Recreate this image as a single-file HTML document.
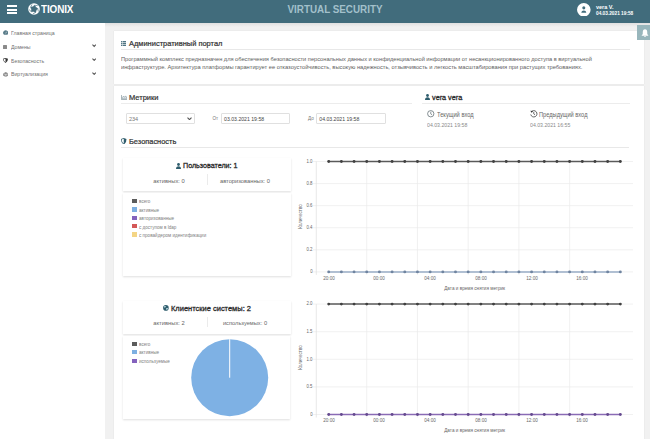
<!DOCTYPE html>
<html><head><meta charset="utf-8"><style>
html,body{margin:0;padding:0;width:650px;height:439px;overflow:hidden;background:#f1f1f1}
body{position:relative;font-family:"Liberation Sans", sans-serif}
body>div,body>svg{position:absolute;white-space:nowrap}
</style></head><body>
<div style="left:0px;top:0px;width:650px;height:23px;background:#416c7c"></div>
<div style="left:7px;top:5.1px;width:10px;height:1.9px;background:#fff"></div>
<div style="left:7px;top:8.8px;width:10px;height:1.9px;background:#fff"></div>
<div style="left:7px;top:12.4px;width:10px;height:1.9px;background:#fff"></div>
<svg style="left:27.7px;top:3.1px" width="12" height="12" viewBox="0 0 24 24">
<circle cx="12" cy="12" r="11.6" fill="#fff"/>
<path d="M13.32 4.52 L15.74 8.39 L19.53 10.94 L16.59 14.44 L15.33 18.83 L11.10 17.12 L6.53 17.28 L6.85 12.72 L5.29 8.43 L9.72 7.33 Z" fill="#416c7c" stroke="#416c7c" stroke-width="1" stroke-linejoin="round"/>
<path d="M13.32 4.52 L19.43 5.31 M19.53 10.94 L20.66 17.00 M15.33 18.83 L9.92 21.78 M6.53 17.28 L2.05 13.05 M5.29 8.43 L7.93 2.86" stroke="#416c7c" stroke-width="1.3"/>
</svg>
<div style="left:41.3px;top:5.19px;font-size:10.2px;line-height:10.2px;color:#fff;font-weight:bold;letter-spacing:-0.1px;transform:scaleX(0.97);transform-origin:left">TIONIX</div>
<div style="left:134.60000000000002px;width:400px;text-align:center;top:4.03px;font-size:11.2px;line-height:11.2px;color:#a3c0cb;font-weight:bold;transform:scaleX(0.88)">VIRTUAL SECURITY</div>
<svg style="left:577.2px;top:2.9px" width="13.6" height="13.6" viewBox="0 0 26 26">
<circle cx="13" cy="13" r="13" fill="#fff"/>
<circle cx="13" cy="9.3" r="2.9" fill="#416c7c"/>
<path d="M8.2 18.8 Q8.5 14.3 13 14.3 Q17.5 14.3 17.8 18.8 Z" fill="#416c7c"/>
</svg>
<div style="left:596px;top:5.22px;font-size:5.5px;line-height:5.5px;color:#fff;font-weight:bold;">vera V.</div>
<div style="left:596px;top:12.24px;font-size:4.75px;line-height:4.75px;color:#fff;font-weight:bold;">04.03.2021 19:58</div>
<div style="left:0px;top:23px;width:650px;height:416px;background:#f1f1f1"></div>
<div style="left:105px;top:23px;width:545px;height:4px;background:linear-gradient(#e0e0e0,#f1f1f1)"></div>
<div style="left:0px;top:23px;width:105px;height:416px;background:#fff"></div>
<div style="left:10.8px;top:29.54px;font-size:6.0px;line-height:6.0px;color:#6f6f6f;transform:scaleX(0.865);transform-origin:left">Главная страница</div>
<div style="left:10.8px;top:43.64px;font-size:6.0px;line-height:6.0px;color:#6f6f6f;transform:scaleX(0.865);transform-origin:left">Домены</div>
<div style="left:10.8px;top:57.54px;font-size:6.0px;line-height:6.0px;color:#6f6f6f;transform:scaleX(0.865);transform-origin:left">Безопасность</div>
<div style="left:10.8px;top:71.24px;font-size:6.0px;line-height:6.0px;color:#6f6f6f;transform:scaleX(0.865);transform-origin:left">Виртуализация</div>
<svg style="left:91.6px;top:44.0px" width="4.4" height="3.5" viewBox="0 0 10 8"><path d="M1 1.5 L5 5.5 L9 1.5" fill="none" stroke="#555" stroke-width="2.4"/></svg>
<svg style="left:91.6px;top:57.8px" width="4.4" height="3.5" viewBox="0 0 10 8"><path d="M1 1.5 L5 5.5 L9 1.5" fill="none" stroke="#555" stroke-width="2.4"/></svg>
<svg style="left:91.6px;top:71.6px" width="4.4" height="3.5" viewBox="0 0 10 8"><path d="M1 1.5 L5 5.5 L9 1.5" fill="none" stroke="#555" stroke-width="2.4"/></svg>
<svg style="left:2.6px;top:30.4px" width="5.4" height="4.8" viewBox="0 0 12 10.6"><path d="M2.2 10.4 A5.6 5.6 0 1 1 9.8 10.4 Z" fill="#5a7d8a"/><path d="M6 7.5 L8 3.8" stroke="#fff" stroke-width="1.2"/></svg>
<div style="left:3.1px;top:44.5px;width:3.5px;height:4.8px;background:#8a8a8a;border-radius:0.5px"></div>
<svg style="left:3px;top:58.2px" width="5" height="5" viewBox="0 0 10 10"><path d="M5 0 L10 1.5 Q10 7.5 5 10 Q0 7.5 0 1.5 Z" fill="#333"/><path d="M5 1.3 L5 8.6 Q1.3 6.8 1.3 2.4 Z" fill="#fff"/></svg>
<svg style="left:2.5px;top:72px" width="5.5" height="5" viewBox="0 0 11 10"><path d="M5.5 0 L11 3 L11 7 L5.5 10 L0 7 L0 3 Z" fill="#8f8f8f"/><path d="M5.5 4 L5.5 10 M0 3 L5.5 5.5 L11 3" stroke="#fff" stroke-width="0.8" fill="none"/></svg>
<div style="left:114px;top:31px;width:530px;height:53px;background:#fff;box-shadow:0 0 1px rgba(0,0,0,0.12)"></div>
<svg style="left:120.9px;top:40.9px" width="5.6" height="5" viewBox="0 0 11 10"><g fill="#4f7583"><rect x="0" y="0" width="2.6" height="2.6"/><rect x="3.4" y="0" width="7.6" height="2.6"/><rect x="0" y="3.7" width="2.6" height="2.6"/><rect x="3.4" y="3.7" width="7.6" height="2.6"/><rect x="0" y="7.4" width="2.6" height="2.6"/><rect x="3.4" y="7.4" width="7.6" height="2.6"/></g></svg>
<div style="left:128.8px;top:39.98px;font-size:7.9px;line-height:7.9px;color:#333;transform:scaleX(0.945);transform-origin:left;-webkit-text-stroke:0.22px #333">Административный портал</div>
<div style="left:120.5px;top:49px;width:509px;height:0.6px;background:#e8e8e8"></div>
<div style="left:121px;top:56.44px;font-size:6.0px;line-height:6.0px;color:#606060;transform:scaleX(0.944);transform-origin:left">Программный комплекс предназначен для обеспечения безопасности персональных данных и конфиденциальной информации от несанкционированного доступа в виртуальной</div>
<div style="left:121px;top:64.24px;font-size:6.0px;line-height:6.0px;color:#606060;transform:scaleX(0.954);transform-origin:left">инфраструктуре. Архитектура платформы гарантирует ее отказоустойчивость, высокую надежность, отзывчивость и легкость масштабирования при растущих требованиях.</div>
<div style="left:114px;top:86px;width:530px;height:360px;background:#fff;box-shadow:0 0 1px rgba(0,0,0,0.12)"></div>
<svg style="left:121px;top:94.8px" width="6" height="5" viewBox="0 0 12 10"><path d="M0.8 0 V9.2 H12" fill="none" stroke="#7d9098" stroke-width="1.4"/><path d="M2.6 7.6 V5 L5 2.2 L7.2 4.6 L9.2 1.8 L11 4 V7.6 Z" fill="#dde5e8" stroke="#7d9098" stroke-width="1.1" stroke-linejoin="round"/></svg>
<div style="left:129.3px;top:94.08px;font-size:7.9px;line-height:7.9px;color:#333;transform:scaleX(0.948);transform-origin:left;-webkit-text-stroke:0.22px #333">Метрики</div>
<div style="left:121px;top:103px;width:291px;height:0.6px;background:#ececec"></div>
<div style="left:125.7px;top:112.6px;width:69.8px;height:11.6px;border:1px solid #e0e0e0;border-radius:1px;box-sizing:border-box;background:#fff"></div>
<div style="left:128.9px;top:116.52px;font-size:5.5px;line-height:5.5px;color:#777;">234</div>
<svg style="left:187.2px;top:116.8px" width="5" height="3.6" viewBox="0 0 10 7"><path d="M1 1.2 L5 5.2 L9 1.2" fill="none" stroke="#555" stroke-width="2.2"/></svg>
<div style="left:212.5px;top:116.92px;font-size:4.6px;line-height:4.6px;color:#777;">От</div>
<div style="left:221.2px;top:112.7px;width:69.2px;height:11.3px;border:1px solid #e0e0e0;border-radius:1px;box-sizing:border-box"></div>
<div style="left:224.1px;top:116.52px;font-size:5.15px;line-height:5.15px;color:#444;">03.03.2021 19:58</div>
<div style="left:308px;top:116.92px;font-size:4.6px;line-height:4.6px;color:#777;">До</div>
<div style="left:316.2px;top:112.7px;width:69.8px;height:11.3px;border:1px solid #e0e0e0;border-radius:1px;box-sizing:border-box"></div>
<div style="left:319.3px;top:116.52px;font-size:5.15px;line-height:5.15px;color:#444;">04.03.2021 19:58</div>
<svg style="left:424.9px;top:94.2px" width="5" height="6" viewBox="0 0 10 12"><circle cx="5" cy="3" r="2.8" fill="#2f5d6d"/><path d="M0 12 Q0 6.5 5 6.5 Q10 6.5 10 12 Z" fill="#2f5d6d"/></svg>
<div style="left:431.7px;top:94.23px;font-size:7.8px;line-height:7.8px;color:#2a2a2a;transform:scaleX(0.93);transform-origin:left;-webkit-text-stroke:0.3px #2a2a2a">vera vera</div>
<div style="left:422px;top:103px;width:207.6px;height:0.6px;background:#ececec"></div>
<svg style="left:427.3px;top:110.3px" width="7.5" height="7.5" viewBox="0 0 15 15"><circle cx="7.5" cy="7.5" r="6.3" fill="none" stroke="#5d6b70" stroke-width="1.5"/><path d="M7.5 3.5 V7.8 L10 9.5" fill="none" stroke="#5d6b70" stroke-width="1.4"/></svg>
<div style="left:437.4px;top:111.67px;font-size:6.3px;line-height:6.3px;color:#666;transform:scaleX(0.905);transform-origin:left">Текущий вход</div>
<div style="left:427.3px;top:122.86px;font-size:5.6px;line-height:5.6px;color:#8a8a8a;transform:scaleX(0.925);transform-origin:left">04.03.2021 19:58</div>
<svg style="left:530px;top:110.3px" width="7.5" height="7.5" viewBox="0 0 15 15"><path d="M2.5 4 A6.3 6.3 0 1 1 1.5 9" fill="none" stroke="#333" stroke-width="1.5"/><path d="M0.5 1.5 L3.5 5.5 L6 2" fill="#333"/><path d="M7.5 4 V7.8 L10 9.5" fill="none" stroke="#333" stroke-width="1.4"/></svg>
<div style="left:539px;top:111.67px;font-size:6.3px;line-height:6.3px;color:#666;transform:scaleX(0.9);transform-origin:left">Предыдущий вход</div>
<div style="left:530px;top:122.86px;font-size:5.6px;line-height:5.6px;color:#8a8a8a;transform:scaleX(0.925);transform-origin:left">04.03.2021 16:55</div>
<svg style="left:121px;top:137.5px" width="5.5" height="6.5" viewBox="0 0 11 13"><path d="M5.5 0 L11 2 Q11 10 5.5 13 Q0 10 0 2 Z" fill="#2f5d6d"/><path d="M5.5 1.6 L5.5 11.3 Q1.5 8.8 1.5 3 Z" fill="#fff"/></svg>
<div style="left:129.3px;top:137.88px;font-size:7.9px;line-height:7.9px;color:#333;transform:scaleX(0.94);transform-origin:left;-webkit-text-stroke:0.22px #333">Безопасность</div>
<div style="left:121px;top:146.7px;width:508px;height:0.6px;background:#e8e8e8"></div>
<div style="left:123px;top:158px;width:168px;height:33px;background:#fff;box-shadow:0 0.5px 2px rgba(0,0,0,0.13)"></div>
<svg style="left:176px;top:162.5px" width="5" height="6" viewBox="0 0 10 12"><circle cx="5" cy="3" r="2.8" fill="#2f5d6d"/><path d="M0 12 Q0 6.5 5 6.5 Q10 6.5 10 12 Z" fill="#2f5d6d"/></svg>
<div style="left:183.3px;top:162.44px;font-size:7.6px;line-height:7.6px;color:#2a2a2a;transform:scaleX(0.94);transform-origin:left;-webkit-text-stroke:0.3px #2a2a2a">Пользователи: 1</div>
<div style="left:-31.19999999999999px;width:400px;text-align:center;top:177.73px;font-size:6.2px;line-height:6.2px;color:#666;transform:scaleX(0.935)">активных: 0</div>
<div style="left:206.5px;top:174px;width:0.7px;height:10.5px;background:#ebebeb"></div>
<div style="left:45px;width:400px;text-align:center;top:177.73px;font-size:6.2px;line-height:6.2px;color:#666;transform:scaleX(0.93)">авторизованных: 0</div>
<div style="left:123px;top:193px;width:168px;height:83px;background:#fff;box-shadow:0 0.5px 2px rgba(0,0,0,0.13)"></div>
<div style="left:132.3px;top:198.8px;width:4.4px;height:4.4px;background:#5c5c5c"></div>
<div style="left:139.3px;top:199.49px;font-size:5.2px;line-height:5.2px;color:#808080;transform:scaleX(0.885);transform-origin:left">всего</div>
<div style="left:132.3px;top:207.20000000000002px;width:4.4px;height:4.4px;background:#7eb0e2"></div>
<div style="left:139.3px;top:207.89px;font-size:5.2px;line-height:5.2px;color:#808080;transform:scaleX(0.885);transform-origin:left">активные</div>
<div style="left:132.3px;top:215.60000000000002px;width:4.4px;height:4.4px;background:#8462bd"></div>
<div style="left:139.3px;top:216.29px;font-size:5.2px;line-height:5.2px;color:#808080;transform:scaleX(0.885);transform-origin:left">авторизованные</div>
<div style="left:132.3px;top:224.0px;width:4.4px;height:4.4px;background:#d45858"></div>
<div style="left:139.3px;top:224.69px;font-size:5.2px;line-height:5.2px;color:#808080;transform:scaleX(0.885);transform-origin:left">с доступом в ldap</div>
<div style="left:132.3px;top:232.4px;width:4.4px;height:4.4px;background:#f4d585"></div>
<div style="left:139.3px;top:233.09px;font-size:5.2px;line-height:5.2px;color:#808080;transform:scaleX(0.885);transform-origin:left">с провайдером идентификации</div>
<div style="left:123px;top:301px;width:168px;height:33px;background:#fff;box-shadow:0 0.5px 2px rgba(0,0,0,0.13)"></div>
<svg style="left:162.9px;top:304.9px" width="5.8" height="5.8" viewBox="0 0 12 12"><circle cx="6" cy="6" r="5.8" fill="#2f5d6d"/><path d="M2.2 2.6 Q4.5 1.2 6.2 2.8 Q5.6 5.2 3.2 5.6 Q1.6 4.4 2.2 2.6 Z M6.8 6.4 Q9.2 5.4 10.6 6.8 Q9.8 10 7.2 10.4 Q6 8.6 6.8 6.4 Z" fill="#b9d6df"/></svg>
<div style="left:171px;top:304.54px;font-size:7.6px;line-height:7.6px;color:#2a2a2a;transform:scaleX(0.985);transform-origin:left;-webkit-text-stroke:0.3px #2a2a2a">Клиентские системы: 2</div>
<div style="left:-31.5px;width:400px;text-align:center;top:320.13px;font-size:6.2px;line-height:6.2px;color:#666;transform:scaleX(0.935)">активных: 2</div>
<div style="left:206.5px;top:316.5px;width:0.7px;height:10.5px;background:#ebebeb"></div>
<div style="left:45px;width:400px;text-align:center;top:320.13px;font-size:6.2px;line-height:6.2px;color:#666;transform:scaleX(0.92)">используемых: 0</div>
<div style="left:123px;top:335.5px;width:167px;height:83.5px;background:#fff;box-shadow:0 0.5px 2px rgba(0,0,0,0.13)"></div>
<div style="left:132.3px;top:341.6px;width:4.4px;height:4.4px;background:#5c5c5c"></div>
<div style="left:139.3px;top:341.59px;font-size:5.2px;line-height:5.2px;color:#808080;transform:scaleX(0.885);transform-origin:left">всего</div>
<div style="left:132.3px;top:350.1px;width:4.4px;height:4.4px;background:#7eb0e2"></div>
<div style="left:139.3px;top:350.09px;font-size:5.2px;line-height:5.2px;color:#808080;transform:scaleX(0.885);transform-origin:left">активные</div>
<div style="left:132.3px;top:358.6px;width:4.4px;height:4.4px;background:#8462bd"></div>
<div style="left:139.3px;top:358.59px;font-size:5.2px;line-height:5.2px;color:#808080;transform:scaleX(0.885);transform-origin:left">используемые</div>
<svg style="left:190px;top:337.5px" width="80" height="80" viewBox="0 0 80 80"><circle cx="39.7" cy="39.7" r="38.5" fill="#7eb1e4"/><path d="M39.7 1.2 V39.7" stroke="#fff" stroke-width="1"/></svg>
<svg style="left:0;top:0" width="650" height="439"><line x1="313" y1="161.50" x2="633" y2="161.50" stroke="#ebebeb" stroke-width="0.7"/><line x1="313" y1="183.58" x2="633" y2="183.58" stroke="#ebebeb" stroke-width="0.7"/><line x1="313" y1="205.66" x2="633" y2="205.66" stroke="#ebebeb" stroke-width="0.7"/><line x1="313" y1="227.74" x2="633" y2="227.74" stroke="#ebebeb" stroke-width="0.7"/><line x1="313" y1="249.82" x2="633" y2="249.82" stroke="#ebebeb" stroke-width="0.7"/><line x1="313" y1="271.90" x2="633" y2="271.90" stroke="#ebebeb" stroke-width="0.7"/><line x1="366.74" y1="161.50" x2="366.74" y2="274.90" stroke="#ebebeb" stroke-width="0.7"/><line x1="417.46" y1="161.50" x2="417.46" y2="274.90" stroke="#ebebeb" stroke-width="0.7"/><line x1="468.18" y1="161.50" x2="468.18" y2="274.90" stroke="#ebebeb" stroke-width="0.7"/><line x1="518.90" y1="161.50" x2="518.90" y2="274.90" stroke="#ebebeb" stroke-width="0.7"/><line x1="569.62" y1="161.50" x2="569.62" y2="274.90" stroke="#ebebeb" stroke-width="0.7"/><line x1="316.3" y1="161.50" x2="316.3" y2="274.90" stroke="#e0e0e0" stroke-width="0.7"/><line x1="328.7" y1="271.90" x2="620.4" y2="271.90" stroke="#98adc6" stroke-width="1.5"/><circle cx="328.70" cy="271.90" r="1.45" fill="#6f84a0"/><circle cx="341.38" cy="271.90" r="1.45" fill="#6f84a0"/><circle cx="354.06" cy="271.90" r="1.45" fill="#6f84a0"/><circle cx="366.74" cy="271.90" r="1.45" fill="#6f84a0"/><circle cx="379.42" cy="271.90" r="1.45" fill="#6f84a0"/><circle cx="392.10" cy="271.90" r="1.45" fill="#6f84a0"/><circle cx="404.78" cy="271.90" r="1.45" fill="#6f84a0"/><circle cx="417.46" cy="271.90" r="1.45" fill="#6f84a0"/><circle cx="430.14" cy="271.90" r="1.45" fill="#6f84a0"/><circle cx="442.82" cy="271.90" r="1.45" fill="#6f84a0"/><circle cx="455.50" cy="271.90" r="1.45" fill="#6f84a0"/><circle cx="468.18" cy="271.90" r="1.45" fill="#6f84a0"/><circle cx="480.86" cy="271.90" r="1.45" fill="#6f84a0"/><circle cx="493.54" cy="271.90" r="1.45" fill="#6f84a0"/><circle cx="506.22" cy="271.90" r="1.45" fill="#6f84a0"/><circle cx="518.90" cy="271.90" r="1.45" fill="#6f84a0"/><circle cx="531.58" cy="271.90" r="1.45" fill="#6f84a0"/><circle cx="544.26" cy="271.90" r="1.45" fill="#6f84a0"/><circle cx="556.94" cy="271.90" r="1.45" fill="#6f84a0"/><circle cx="569.62" cy="271.90" r="1.45" fill="#6f84a0"/><circle cx="582.30" cy="271.90" r="1.45" fill="#6f84a0"/><circle cx="594.98" cy="271.90" r="1.45" fill="#6f84a0"/><circle cx="607.66" cy="271.90" r="1.45" fill="#6f84a0"/><circle cx="620.34" cy="271.90" r="1.45" fill="#6f84a0"/><line x1="328.7" y1="161.50" x2="620.4" y2="161.50" stroke="#5a5a5a" stroke-width="1.5"/><circle cx="328.70" cy="161.50" r="1.45" fill="#404040"/><circle cx="341.38" cy="161.50" r="1.45" fill="#404040"/><circle cx="354.06" cy="161.50" r="1.45" fill="#404040"/><circle cx="366.74" cy="161.50" r="1.45" fill="#404040"/><circle cx="379.42" cy="161.50" r="1.45" fill="#404040"/><circle cx="392.10" cy="161.50" r="1.45" fill="#404040"/><circle cx="404.78" cy="161.50" r="1.45" fill="#404040"/><circle cx="417.46" cy="161.50" r="1.45" fill="#404040"/><circle cx="430.14" cy="161.50" r="1.45" fill="#404040"/><circle cx="442.82" cy="161.50" r="1.45" fill="#404040"/><circle cx="455.50" cy="161.50" r="1.45" fill="#404040"/><circle cx="468.18" cy="161.50" r="1.45" fill="#404040"/><circle cx="480.86" cy="161.50" r="1.45" fill="#404040"/><circle cx="493.54" cy="161.50" r="1.45" fill="#404040"/><circle cx="506.22" cy="161.50" r="1.45" fill="#404040"/><circle cx="518.90" cy="161.50" r="1.45" fill="#404040"/><circle cx="531.58" cy="161.50" r="1.45" fill="#404040"/><circle cx="544.26" cy="161.50" r="1.45" fill="#404040"/><circle cx="556.94" cy="161.50" r="1.45" fill="#404040"/><circle cx="569.62" cy="161.50" r="1.45" fill="#404040"/><circle cx="582.30" cy="161.50" r="1.45" fill="#404040"/><circle cx="594.98" cy="161.50" r="1.45" fill="#404040"/><circle cx="607.66" cy="161.50" r="1.45" fill="#404040"/><circle cx="620.34" cy="161.50" r="1.45" fill="#404040"/></svg>
<div style="right:337.6px;top:159.87px;font-size:4.7px;line-height:4.7px;color:#666;transform:scaleX(0.92);transform-origin:right">1.0</div>
<div style="right:337.6px;top:181.95px;font-size:4.7px;line-height:4.7px;color:#666;transform:scaleX(0.92);transform-origin:right">0.8</div>
<div style="right:337.6px;top:204.03px;font-size:4.7px;line-height:4.7px;color:#666;transform:scaleX(0.92);transform-origin:right">0.6</div>
<div style="right:337.6px;top:226.11px;font-size:4.7px;line-height:4.7px;color:#666;transform:scaleX(0.92);transform-origin:right">0.4</div>
<div style="right:337.6px;top:248.19px;font-size:4.7px;line-height:4.7px;color:#666;transform:scaleX(0.92);transform-origin:right">0.2</div>
<div style="right:337.6px;top:270.27px;font-size:4.7px;line-height:4.7px;color:#666;transform:scaleX(0.92);transform-origin:right">0</div>
<div style="left:128.7px;width:400px;text-align:center;top:275.70px;font-size:5.0px;line-height:5.0px;color:#666;transform:scaleX(0.92)">20:00</div>
<div style="left:179.41999999999996px;width:400px;text-align:center;top:275.70px;font-size:5.0px;line-height:5.0px;color:#666;transform:scaleX(0.92)">00:00</div>
<div style="left:230.14px;width:400px;text-align:center;top:275.70px;font-size:5.0px;line-height:5.0px;color:#666;transform:scaleX(0.92)">04:00</div>
<div style="left:280.86px;width:400px;text-align:center;top:275.70px;font-size:5.0px;line-height:5.0px;color:#666;transform:scaleX(0.92)">08:00</div>
<div style="left:331.5799999999999px;width:400px;text-align:center;top:275.70px;font-size:5.0px;line-height:5.0px;color:#666;transform:scaleX(0.92)">12:00</div>
<div style="left:382.29999999999995px;width:400px;text-align:center;top:275.70px;font-size:5.0px;line-height:5.0px;color:#666;transform:scaleX(0.92)">16:00</div>
<div style="left:274.7px;width:400px;text-align:center;top:286.80px;font-size:4.65px;line-height:4.65px;color:#666;">Дата и время снятия метрик</div>
<div style="left:249.60000000000002px;top:214.2px;width:100px;text-align:center;font-size:4.6px;line-height:5px;color:#666;transform:rotate(-90deg)">Количество</div>
<svg style="left:0;top:0" width="650" height="439"><line x1="313" y1="304.10" x2="633" y2="304.10" stroke="#ebebeb" stroke-width="0.7"/><line x1="313" y1="331.70" x2="633" y2="331.70" stroke="#ebebeb" stroke-width="0.7"/><line x1="313" y1="359.30" x2="633" y2="359.30" stroke="#ebebeb" stroke-width="0.7"/><line x1="313" y1="386.90" x2="633" y2="386.90" stroke="#ebebeb" stroke-width="0.7"/><line x1="313" y1="414.50" x2="633" y2="414.50" stroke="#ebebeb" stroke-width="0.7"/><line x1="366.74" y1="304.10" x2="366.74" y2="417.50" stroke="#ebebeb" stroke-width="0.7"/><line x1="417.46" y1="304.10" x2="417.46" y2="417.50" stroke="#ebebeb" stroke-width="0.7"/><line x1="468.18" y1="304.10" x2="468.18" y2="417.50" stroke="#ebebeb" stroke-width="0.7"/><line x1="518.90" y1="304.10" x2="518.90" y2="417.50" stroke="#ebebeb" stroke-width="0.7"/><line x1="569.62" y1="304.10" x2="569.62" y2="417.50" stroke="#ebebeb" stroke-width="0.7"/><line x1="316.3" y1="304.10" x2="316.3" y2="417.50" stroke="#e0e0e0" stroke-width="0.7"/><line x1="328.7" y1="414.50" x2="620.4" y2="414.50" stroke="#8a6bb5" stroke-width="1.5"/><circle cx="328.70" cy="414.50" r="1.45" fill="#654a8f"/><circle cx="341.38" cy="414.50" r="1.45" fill="#654a8f"/><circle cx="354.06" cy="414.50" r="1.45" fill="#654a8f"/><circle cx="366.74" cy="414.50" r="1.45" fill="#654a8f"/><circle cx="379.42" cy="414.50" r="1.45" fill="#654a8f"/><circle cx="392.10" cy="414.50" r="1.45" fill="#654a8f"/><circle cx="404.78" cy="414.50" r="1.45" fill="#654a8f"/><circle cx="417.46" cy="414.50" r="1.45" fill="#654a8f"/><circle cx="430.14" cy="414.50" r="1.45" fill="#654a8f"/><circle cx="442.82" cy="414.50" r="1.45" fill="#654a8f"/><circle cx="455.50" cy="414.50" r="1.45" fill="#654a8f"/><circle cx="468.18" cy="414.50" r="1.45" fill="#654a8f"/><circle cx="480.86" cy="414.50" r="1.45" fill="#654a8f"/><circle cx="493.54" cy="414.50" r="1.45" fill="#654a8f"/><circle cx="506.22" cy="414.50" r="1.45" fill="#654a8f"/><circle cx="518.90" cy="414.50" r="1.45" fill="#654a8f"/><circle cx="531.58" cy="414.50" r="1.45" fill="#654a8f"/><circle cx="544.26" cy="414.50" r="1.45" fill="#654a8f"/><circle cx="556.94" cy="414.50" r="1.45" fill="#654a8f"/><circle cx="569.62" cy="414.50" r="1.45" fill="#654a8f"/><circle cx="582.30" cy="414.50" r="1.45" fill="#654a8f"/><circle cx="594.98" cy="414.50" r="1.45" fill="#654a8f"/><circle cx="607.66" cy="414.50" r="1.45" fill="#654a8f"/><circle cx="620.34" cy="414.50" r="1.45" fill="#654a8f"/><line x1="328.7" y1="304.10" x2="620.4" y2="304.10" stroke="#5a5a5a" stroke-width="1.5"/><circle cx="328.70" cy="304.10" r="1.45" fill="#404040"/><circle cx="341.38" cy="304.10" r="1.45" fill="#404040"/><circle cx="354.06" cy="304.10" r="1.45" fill="#404040"/><circle cx="366.74" cy="304.10" r="1.45" fill="#404040"/><circle cx="379.42" cy="304.10" r="1.45" fill="#404040"/><circle cx="392.10" cy="304.10" r="1.45" fill="#404040"/><circle cx="404.78" cy="304.10" r="1.45" fill="#404040"/><circle cx="417.46" cy="304.10" r="1.45" fill="#404040"/><circle cx="430.14" cy="304.10" r="1.45" fill="#404040"/><circle cx="442.82" cy="304.10" r="1.45" fill="#404040"/><circle cx="455.50" cy="304.10" r="1.45" fill="#404040"/><circle cx="468.18" cy="304.10" r="1.45" fill="#404040"/><circle cx="480.86" cy="304.10" r="1.45" fill="#404040"/><circle cx="493.54" cy="304.10" r="1.45" fill="#404040"/><circle cx="506.22" cy="304.10" r="1.45" fill="#404040"/><circle cx="518.90" cy="304.10" r="1.45" fill="#404040"/><circle cx="531.58" cy="304.10" r="1.45" fill="#404040"/><circle cx="544.26" cy="304.10" r="1.45" fill="#404040"/><circle cx="556.94" cy="304.10" r="1.45" fill="#404040"/><circle cx="569.62" cy="304.10" r="1.45" fill="#404040"/><circle cx="582.30" cy="304.10" r="1.45" fill="#404040"/><circle cx="594.98" cy="304.10" r="1.45" fill="#404040"/><circle cx="607.66" cy="304.10" r="1.45" fill="#404040"/><circle cx="620.34" cy="304.10" r="1.45" fill="#404040"/></svg>
<div style="right:337.6px;top:302.47px;font-size:4.7px;line-height:4.7px;color:#666;transform:scaleX(0.92);transform-origin:right">2.0</div>
<div style="right:337.6px;top:330.07px;font-size:4.7px;line-height:4.7px;color:#666;transform:scaleX(0.92);transform-origin:right">1.5</div>
<div style="right:337.6px;top:357.67px;font-size:4.7px;line-height:4.7px;color:#666;transform:scaleX(0.92);transform-origin:right">1.0</div>
<div style="right:337.6px;top:385.27px;font-size:4.7px;line-height:4.7px;color:#666;transform:scaleX(0.92);transform-origin:right">0.5</div>
<div style="right:337.6px;top:412.87px;font-size:4.7px;line-height:4.7px;color:#666;transform:scaleX(0.92);transform-origin:right">0</div>
<div style="left:128.7px;width:400px;text-align:center;top:418.30px;font-size:5.0px;line-height:5.0px;color:#666;transform:scaleX(0.92)">20:00</div>
<div style="left:179.41999999999996px;width:400px;text-align:center;top:418.30px;font-size:5.0px;line-height:5.0px;color:#666;transform:scaleX(0.92)">00:00</div>
<div style="left:230.14px;width:400px;text-align:center;top:418.30px;font-size:5.0px;line-height:5.0px;color:#666;transform:scaleX(0.92)">04:00</div>
<div style="left:280.86px;width:400px;text-align:center;top:418.30px;font-size:5.0px;line-height:5.0px;color:#666;transform:scaleX(0.92)">08:00</div>
<div style="left:331.5799999999999px;width:400px;text-align:center;top:418.30px;font-size:5.0px;line-height:5.0px;color:#666;transform:scaleX(0.92)">12:00</div>
<div style="left:382.29999999999995px;width:400px;text-align:center;top:418.30px;font-size:5.0px;line-height:5.0px;color:#666;transform:scaleX(0.92)">16:00</div>
<div style="left:274.7px;width:400px;text-align:center;top:428.90px;font-size:4.65px;line-height:4.65px;color:#666;">Дата и время снятия метрик</div>
<div style="left:249.60000000000002px;top:355.4px;width:100px;text-align:center;font-size:4.6px;line-height:5px;color:#666;transform:rotate(-90deg)">Количество</div>
<div style="left:637.1px;top:25.4px;width:12.9px;height:14.5px;background:#98b6bc"></div>
<svg style="left:640.8px;top:28.8px" width="8" height="8.5" viewBox="0 0 16 17"><path d="M8 0.5 Q12.5 0.5 12.5 7 L12.5 10 L15 13.5 L1 13.5 L3.5 10 L3.5 7 Q3.5 0.5 8 0.5 Z M6.2 14.3 L9.8 14.3 Q9.8 16.5 8 16.5 Q6.2 16.5 6.2 14.3 Z" fill="#fff"/></svg>
</body></html>
